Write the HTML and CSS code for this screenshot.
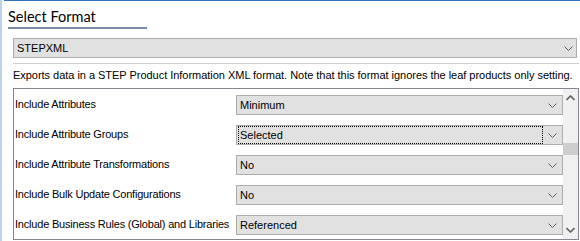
FILE: index.html
```html
<!DOCTYPE html>
<html lang="en">
<head>
  <meta charset="UTF-8" />
  <title>Select Format</title>
  <link rel="stylesheet" href="styles.css">
</head>
<body>
  <div class="frame">
    <div class="panel">
      <h2 class="title">Select Format</h2>

      <div class="select format">
        <span>STEPXML</span>
        <svg class="chev" width="9" height="5" viewBox="0 0 9 5"><path d="M0.5 0.5 L4.5 4.5 L8.5 0.5" fill="none" stroke="#606060"/></svg>
      </div>

      <p class="desc">Exports data in a STEP Product Information XML format. Note that this format ignores the leaf products only setting.</p>

      <div class="options">
        <div class="rows">
          <div class="row">
            <label>Include Attributes</label>
            <div class="select"><span>Minimum</span><svg class="chev" width="9" height="5" viewBox="0 0 9 5"><path d="M0.5 0.5 L4.5 4.5 L8.5 0.5" fill="none" stroke="#606060"/></svg></div>
          </div>
          <div class="row">
            <label>Include Attribute Groups</label>
            <div class="select focus"><span class="focus-ring">Selected</span><svg class="chev" width="9" height="5" viewBox="0 0 9 5"><path d="M0.5 0.5 L4.5 4.5 L8.5 0.5" fill="none" stroke="#606060"/></svg></div>
          </div>
          <div class="row">
            <label>Include Attribute Transformations</label>
            <div class="select"><span>No</span><svg class="chev" width="9" height="5" viewBox="0 0 9 5"><path d="M0.5 0.5 L4.5 4.5 L8.5 0.5" fill="none" stroke="#606060"/></svg></div>
          </div>
          <div class="row">
            <label>Include Bulk Update Configurations</label>
            <div class="select"><span>No</span><svg class="chev" width="9" height="5" viewBox="0 0 9 5"><path d="M0.5 0.5 L4.5 4.5 L8.5 0.5" fill="none" stroke="#606060"/></svg></div>
          </div>
          <div class="row">
            <label>Include Business Rules (Global) and Libraries</label>
            <div class="select"><span>Referenced</span><svg class="chev" width="9" height="5" viewBox="0 0 9 5"><path d="M0.5 0.5 L4.5 4.5 L8.5 0.5" fill="none" stroke="#606060"/></svg></div>
          </div>
        </div>

        <div class="scrollbar">
          <svg class="arrow" width="9" height="6" viewBox="0 0 9 6"><path d="M0.5 5 L4.5 1 L8.5 5" fill="none" stroke="#606060" stroke-width="1.6"/></svg>
          <div class="track"><div class="thumb"></div></div>
          <svg class="arrow" width="9" height="6" viewBox="0 0 9 6"><path d="M0.5 1 L4.5 5 L8.5 1" fill="none" stroke="#606060" stroke-width="1.6"/></svg>
        </div>
      </div>
    </div>
  </div>
</body>
</html>
```

FILE: styles.css
```css
body {
  margin: 0;
  background: white;
  font-family: 'Liberation Sans', Arial, sans-serif;
  font-size: 11px;
  color: #000;
  overflow: hidden;
}

.frame {
  height: 241px;
  border-left: 2px solid #bcd3ec;
  padding-left: 2px;
}

.panel {
  border-top: 1px solid #2f72c0;
  padding: 0 1px 0 9px;
  height: 240px;
}

.title {
  display: inline-block;
  margin: 6px 0 0 -5px;
  padding: 0 51px 0 0;
  height: 20px;
  line-height: 20px;
  font-family: Lato, sans-serif;
  font-weight: normal;
  font-size: 14.5px;
  border-bottom: 2px solid #7c8ba5;
}

.select {
  display: flex;
  align-items: center;
  justify-content: space-between;
  height: 18px;
  background: #e1e1e1;
  border: 1px solid #adadad;
  padding: 0 5px 0 3px;
}

.format {
  margin: 9px 2px 0 0;
  padding-right: 3px;
}

.desc {
  margin: 5px 0 0 0;
  padding-top: 4px;
  border-top: 1px solid #d0d0d0;
  white-space: nowrap;
  line-height: 14px;
  letter-spacing: -0.03px;
}

.options {
  display: flex;
  margin-top: 6px;
  height: 150px;
  border: 1px solid #828790;
  overflow: hidden;
}

.rows {
  flex: 1;
  padding-top: 6px;
}

.row {
  display: flex;
  align-items: center;
  height: 20px;
  margin-bottom: 10px;
}

.row label {
  width: 221px;
  padding-left: 1px;
  margin-bottom: 2px;
  white-space: nowrap;
  letter-spacing: -0.2px;
}

.row .select {
  flex: 1;
}

.focus .focus-ring {
  flex: 1;
  height: 16px;
  line-height: 16px;
  margin: 0 5px 0 -2px;
  padding-left: 1px;
  border: 1px dotted #000;
}

.scrollbar {
  width: 15px;
  background: #f0f0f0;
  display: flex;
  flex-direction: column;
  align-items: center;
}

.arrow {
  margin: 6px 0;
}

.track {
  flex: 1;
  width: 100%;
}

.thumb {
  margin-top: 36px;
  height: 12px;
  background: #cdcdcd;
}
```
